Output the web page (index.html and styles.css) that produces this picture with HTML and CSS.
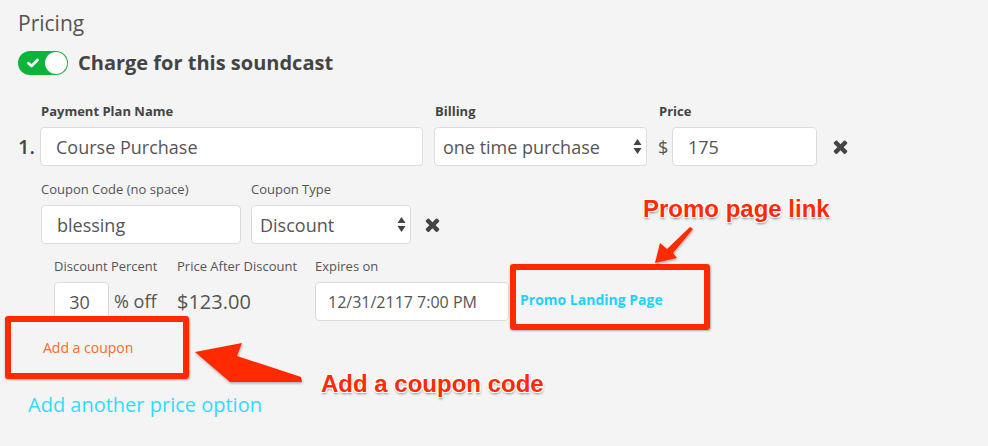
FILE: index.html
```html
<!DOCTYPE html>
<html>
<head>
<meta charset="utf-8">
<link rel="stylesheet" href="styles.css">
</head>
<body>
<div class="page">
  <h2 class="title">Pricing</h2>
  <div class="charge">
    <span class="toggle">
      <svg class="check" width="12" height="10" viewBox="0 0 12 10"><path d="M1.5 5.2 L4.6 8 L10.5 2" fill="none" stroke="#fff" stroke-width="2.6" stroke-linecap="round" stroke-linejoin="round"/></svg>
      <span class="knob"></span>
    </span>
    <span class="charge-label">Charge for this soundcast</span>
  </div>

  <div class="plan">
    <div class="plan-row">
      <span class="num">1.</span>
      <div class="field f-name">
        <span class="lbl-bold">Payment Plan Name</span>
        <div class="input pad-l">Course Purchase</div>
      </div>
      <div class="field f-billing">
        <span class="lbl-bold">Billing</span>
        <div class="input select">
          <span>one time purchase</span>
          <svg class="updown" width="9" height="17" viewBox="0 0 9 17"><path d="M0.5 7 L4.5 1 L8.5 7 Z M0.5 10 L4.5 16 L8.5 10 Z" fill="#444"/></svg>
        </div>
      </div>
      <div class="field f-price">
        <span class="lbl-bold">Price</span>
        <div class="price-wrap">
          <span class="dollar">$</span>
          <div class="input pad-l price-input">175</div>
        </div>
      </div>
      <svg class="x x-1" width="15" height="15" viewBox="110 238 1188 1316"><path d="M1298 1322q0 40-28 68l-136 136q-28 28-68 28t-68-28l-294-294-294 294q-28 28-68 28t-68-28l-136-136q-28-28-28-68t28-68l294-294-294-294q-28-28-28-68t28-68l136-136q28-28 68-28t68 28l294 294 294-294q28-28 68-28t68 28l136 136q28 28 28 68t-28 68l-294 294 294 294q28 28 28 68z" fill="#444"/></svg>
    </div>

    <div class="coupon-row">
      <div class="field f-code">
        <span class="lbl">Coupon Code (no space)</span>
        <div class="input pad-l">blessing</div>
      </div>
      <div class="field f-type">
        <span class="lbl">Coupon Type</span>
        <div class="input select">
          <span>Discount</span>
          <svg class="updown" width="9" height="17" viewBox="0 0 9 17"><path d="M0.5 7 L4.5 1 L8.5 7 Z M0.5 10 L4.5 16 L8.5 10 Z" fill="#444"/></svg>
        </div>
      </div>
      <svg class="x x-2" width="15" height="15" viewBox="110 238 1188 1316"><path d="M1298 1322q0 40-28 68l-136 136q-28 28-68 28t-68-28l-294-294-294 294q-28 28-68 28t-68-28l-136-136q-28-28-28-68t28-68l294-294-294-294q-28-28-28-68t28-68l136-136q28-28 68-28t68 28l294 294 294-294q28-28 68-28t68 28l136 136q28 28 28 68t-28 68l-294 294 294 294q28 28 28 68z" fill="#444"/></svg>
    </div>

    <div class="discount-row">
      <div class="col c1">
        <span class="lbl">Discount Percent</span>
        <div class="pct">
          <div class="input pct-input">30</div>
          <span class="off">% off</span>
        </div>
      </div>
      <div class="col c2">
        <span class="lbl">Price After Discount</span>
        <span class="after">$123.00</span>
      </div>
      <div class="col c3">
        <span class="lbl">Expires on</span>
        <div class="input date">12/31/2117 7:00 PM</div>
      </div>
      <a class="promo">Promo Landing Page</a>
    </div>

    <div class="add-coupon">Add a coupon</div>
    <div class="add-price">Add another price option</div>
  </div>

  <div class="annot-box box-coupon"></div>
  <div class="annot-box box-promo"></div>
  <svg class="arrows" width="988" height="446" viewBox="0 0 988 446">
    <defs>
      <filter id="sh" x="-20%" y="-20%" width="140%" height="140%">
        <feDropShadow dx="0.5" dy="1.5" stdDeviation="1.2" flood-color="#000" flood-opacity="0.3"/>
      </filter>
    </defs>
    <polygon points="195,352 242,343 237,356 301,377 302,382 230,382" fill="#ff2a00" filter="url(#sh)"/>
    <polygon points="655,263 660,243 667,249 690,227 693,229 673,253 677,258" fill="#ff2a00" filter="url(#sh)"/>
  </svg>
  <span class="annot-text t-promo">Promo page link</span>
  <span class="annot-text t-coupon">Add a coupon code</span>
</div>
</body>
</html>
```

FILE: styles.css
```css
* { box-sizing: border-box; }
html, body { margin: 0; padding: 0; }
body {
  background: #f4f4f4;
  font-family: "Open Sans", "Noto Sans", sans-serif;
  color: #555;
  width: 988px;
  height: 446px;
  overflow: hidden;
}
.page {
  position: relative;
  padding: 9px 0 0 18px;
  height: 446px;
}
.title {
  margin: 0;
  font-size: 21px;
  line-height: 28px;
  font-weight: 400;
  color: #555;
}
.charge {
  margin-top: 14px;
  display: flex;
  align-items: center;
  height: 24px;
  gap: 10px;
}
.toggle {
  position: relative;
  width: 50px;
  height: 24px;
  border-radius: 12px;
  background: #0cb43a;
  display: inline-block;
}
.check {
  position: absolute;
  left: 9px;
  top: 7px;
}
.knob {
  position: absolute;
  right: 1px;
  top: 1px;
  width: 22px;
  height: 22px;
  border-radius: 50%;
  background: #fff;
}
.charge-label {
  font-size: 20px;
  line-height: 24px;
  font-weight: 700;
  color: #444;
}
.plan { margin-top: 28px; }
.plan-row {
  display: flex;
  align-items: flex-end;
}
.num {
  width: 22px;
  font-size: 20px;
  font-weight: 600;
  line-height: 39px;
  color: #444;
}
.field { display: flex; flex-direction: column; }
.lbl-bold {
  display: block;
  font-size: 13px;
  line-height: 16px;
  font-weight: 700;
  color: #444;
  margin: 0 0 8px 1px;
  white-space: nowrap;
}
.lbl {
  display: block;
  font-size: 13px;
  line-height: 18px;
  color: #555;
  margin-bottom: 7px;
  white-space: nowrap;
}
.input {
  height: 39px;
  background: #fff;
  border: 1px solid #dcdcdc;
  border-radius: 4px;
  display: flex;
  align-items: center;
  font-size: 18px;
  color: #555;
  white-space: nowrap;
}
.pad-l { padding: 0 15px; }
.select {
  justify-content: space-between;
  padding: 0 4px 0 8px;
}
.f-name { width: 383px; }
.f-billing { width: 213px; margin-left: 11px; }
.f-price { margin-left: 11px; }
.price-wrap { display: flex; align-items: center; }
.dollar { width: 14px; font-size: 18px; color: #555; }
.price-input { width: 145px; }
.x { flex: none; }
.x-1 { margin: 0 0 12px 16px; }
.coupon-row {
  margin-top: 14px;
  padding-left: 23px;
  display: flex;
  align-items: flex-end;
}
.f-code { width: 200px; }
.f-type { width: 160px; margin-left: 10px; }
.x-2 { margin: 0 0 12px 14px; }
.discount-row {
  margin-top: 13px;
  padding-left: 36px;
  display: flex;
  align-items: flex-end;
}
.col { display: flex; flex-direction: column; }
.c1 { width: 123px; }
.c2 { width: 138px; }
.c3 { width: 194px; }
.pct { display: flex; align-items: center; }
.pct-input { width: 55px; justify-content: center; padding-right: 4px; }
.off { margin-left: 5px; font-size: 18px; line-height: 39px; color: #555; }
.after { font-size: 20px; line-height: 39px; color: #555; }
.date { font-size: 16px; padding-left: 12px; }
.promo {
  margin: 0 0 2px 11px;
  font-size: 14px;
  line-height: 39px;
  font-weight: 700;
  color: #1fd2f7;
  white-space: nowrap;
}
.add-coupon {
  margin-top: 18px;
  padding-left: 25px;
  font-size: 14px;
  line-height: 18px;
  color: #ff6a1f;
}
.add-price {
  margin-top: 35px;
  padding-left: 10px;
  font-size: 20px;
  line-height: 26px;
  color: #2fdcff;
}
.annot-box {
  position: absolute;
  border: 6px solid #ff2a00;
  border-radius: 3px;
  box-shadow: 0.5px 1px 2px rgba(0,0,0,0.3);
}
.box-coupon { left: 5px; top: 316px; width: 184px; height: 63px; }
.box-promo { left: 510px; top: 264px; width: 200px; height: 66px; }
.arrows {
  position: absolute;
  left: 0;
  top: 0;
  pointer-events: none;
}
.annot-text {
  position: absolute;
  font-family: "Liberation Sans", Arial, sans-serif;
  font-weight: 700;
  font-size: 24px;
  line-height: 24px;
  color: #ff2a00;
  white-space: nowrap;
  text-shadow: -1px -1px 0 #fff, 1px -1px 0 #fff, -1px 1px 0 #fff, 1px 1px 0 #fff,
    0 -1px 0 #fff, 0 1px 0 #fff, -1px 0 0 #fff, 1px 0 0 #fff, 0.5px 2px 2.5px rgba(0,0,0,0.45);
}
.t-promo { left: 643px; top: 197px; }
.t-coupon { left: 321px; top: 372px; }
```
